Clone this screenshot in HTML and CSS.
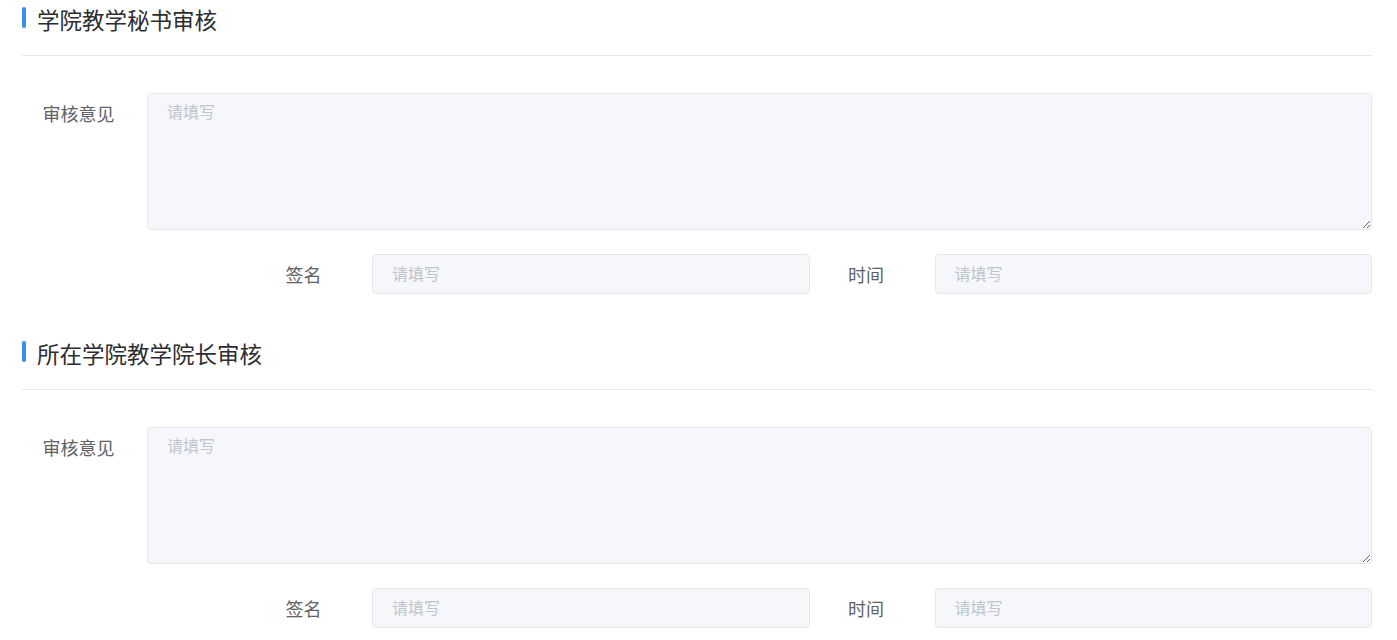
FILE: index.html
```html
<!DOCTYPE html>
<html lang="zh-CN">
<head>
    <meta charset="UTF-8">
    <title>审核</title>
    <link rel="stylesheet" href="styles.css">
</head>
<body>
    <div class="page">
        <div class="section">
            <div class="title">学院教学秘书审核</div>
            <div class="divider"></div>
            <div class="form-item">
                <label class="label">审核意见</label>
                <textarea class="textarea" placeholder="请填写" readonly></textarea>
            </div>
            <div class="row">
                <div class="col">
                    <label class="label">签名</label>
                    <input class="input" type="text" placeholder="请填写" readonly>
                </div>
                <div class="col">
                    <label class="label">时间</label>
                    <input class="input" type="text" placeholder="请填写" readonly>
                </div>
            </div>
        </div>
        <div class="section">
            <div class="title">所在学院教学院长审核</div>
            <div class="divider"></div>
            <div class="form-item">
                <label class="label">审核意见</label>
                <textarea class="textarea" placeholder="请填写" readonly></textarea>
            </div>
            <div class="row">
                <div class="col">
                    <label class="label">签名</label>
                    <input class="input" type="text" placeholder="请填写" readonly>
                </div>
                <div class="col">
                    <label class="label">时间</label>
                    <input class="input" type="text" placeholder="请填写" readonly>
                </div>
            </div>
        </div>
    </div>
</body>
</html>
```

FILE: styles.css
```css
body {
    margin: 0;
    background-color: #fff;
    font-family: "Noto Sans CJK SC", "Noto Sans", sans-serif;
}
.page {
    width: 1350px;
    margin-left: 22px;
}
.section {
    margin-bottom: 40px;
}
.title {
    display: flex;
    align-items: center;
    height: 38px;
    font-size: 22.5px;
    color: #2b2d30;
}
.title::before {
    content: "";
    width: 4px;
    height: 21px;
    margin-right: 11px;
    margin-top: -3px;
    border-radius: 2px;
    background-color: #3590e8;
}
.divider {
    height: 1px;
    margin-top: 17px;
    background-color: #e4e7ed;
}
.form-item {
    display: flex;
    margin-top: 37px;
}
.label {
    width: 125px;
    flex-shrink: 0;
    padding-right: 12px;
    box-sizing: border-box;
    text-align: center;
    font-size: 18px;
    line-height: 40px;
    color: #606266;
}
.textarea, .input {
    flex: 1;
    min-width: 0;
    box-sizing: border-box;
    border: 1px solid #e4e7ed;
    border-radius: 4px;
    background-color: #f5f7fa;
    font-family: inherit;
    font-size: 16px;
    color: #606266;
    outline: none;
}
.textarea {
    height: 137px;
    padding: 5px 19px;
    line-height: 24px;
    resize: vertical;
}
.input {
    height: 40px;
    padding: 0 19px 2px;
}
.textarea::placeholder, .input::placeholder {
    color: #c0c4cc;
}
.row {
    display: flex;
    margin-top: 24px;
    margin-left: 225px;
}
.col {
    flex: 1;
    display: flex;
}
```
